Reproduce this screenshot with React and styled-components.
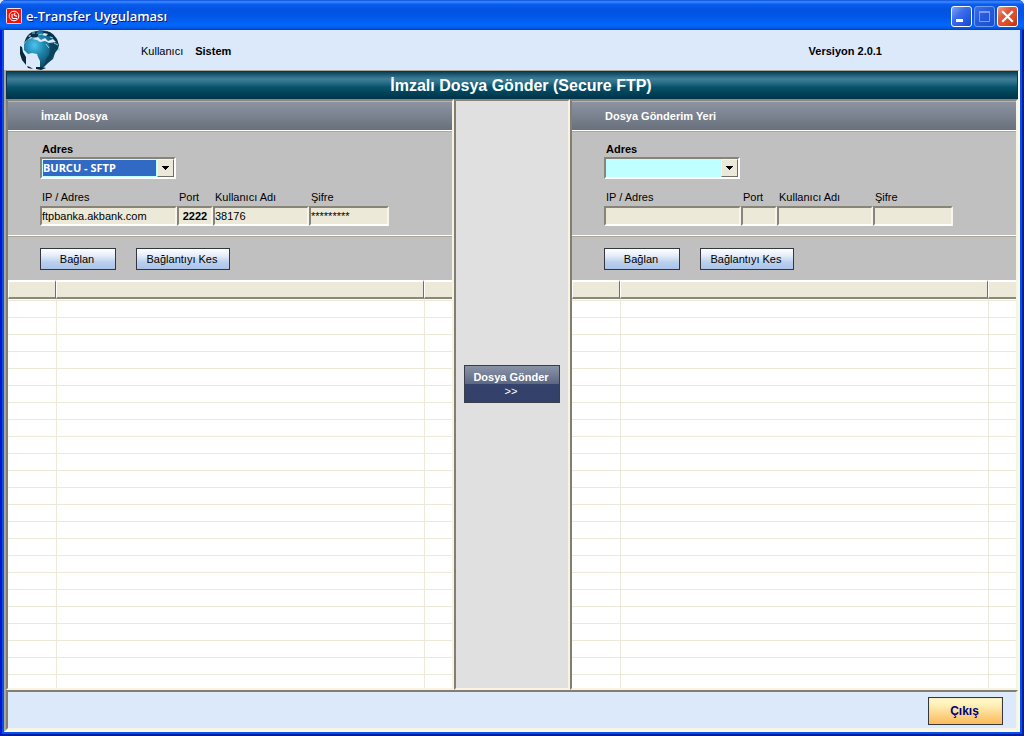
import React, { useState } from 'react';
import styled, { createGlobalStyle } from 'styled-components';

const GlobalStyle = createGlobalStyle`
* {
  box-sizing: border-box;
}
body {
  margin: 0;
  background: #dce9fb;
  font-family: "Liberation Sans", Arial, sans-serif;
  font-size: 11px;
  line-height: 14px;
  color: black;
}
button, input, select {
  font: inherit;
  margin: 0;
}
`
const Window = styled.div`
  display: flex;
  flex-direction: column;
  height: 100vh;
  min-height: 480px;
  padding: 0 2px 2px;
  border: solid;
  border-width: 0 2px 2px;
  border-color: #0831d9 #001ea0 #001ea0 #0019cf;
  border-radius: 6px 6px 0 0;
  background: #0a50e6;
`
const TitleBar = styled.header`
  display: flex;
  align-items: center;
  gap: 4px;
  flex: none;
  height: 30px;
  margin: 0 -4px;
  padding: 2px 6px 0;
  border-radius: 6px 6px 0 0;
  background: linear-gradient(#0a4bd8 0, #3b8bff 6%, #0a5cee 14%, #0253e0 32%, #0257e8 55%, #0366fc 82%, #0260f4 90%, #0142c4 100%);
`
const Title = styled.h1`
  flex: 1;
  margin: 0;
  font: 600 13px/18px "Open Sans", "Noto Sans", sans-serif;
  color: white;
  text-shadow: 1px 1px 0 #0a1883;
`
const Controls = styled.div`
  display: flex;
  gap: 2px;
`
const ControlButton = styled.button`
  display: flex;
  width: 21px;
  height: 21px;
  padding: 0;
  border: 1px solid ${p => p.$dim ? '#6f9bf0' : 'white'};
  border-radius: 3px;
  background: ${p => p.$close
    ? 'linear-gradient(135deg, #f0a08a 0, #e0593a 35%, #dc4a22 70%, #b83208 100%)'
    : p.$dim
      ? 'linear-gradient(135deg, #3f70e8, #2359dc 50%, #1a4fd0)'
      : 'linear-gradient(135deg, #7ea4f6 0, #3a6ceb 40%, #2257e0 75%, #1745bd 100%)'};
`
const InfoBar = styled.div`
  display: flex;
  align-items: center;
  flex: none;
  height: 40px;
  padding: 0 138px 0 16px;
  background: #dce9fb;
`
const UserLabel = styled.span`
  margin-left: 81px;
  padding-top: 2px;
`
const UserName = styled.strong`
  flex: 1;
  margin-left: 12px;
  padding-top: 2px;
`
const Version = styled.strong`
  padding-top: 2px;
`
const Frame = styled.main`
  display: flex;
  flex-direction: column;
  flex: 1;
  min-height: 0;
  border: solid;
  border-width: 1px 2px 2px;
  border-color: #aca899 #fbf9f0 #fbf9f0 #aca899;
  background: #dce9fb;
`
const Banner = styled.h2`
  flex: none;
  margin: 0;
  padding-left: 18px;
  height: 28px;
  border: solid #0a3450;
  border-width: 1px 1px 0;
  background: linear-gradient(#0a4058 0, #26647f 14%, #3f7e97 26%, #2a6d87 40%, #06536b 56%, #004257 78%, #013349 100%);
  font-size: 16px;
  line-height: 27px;
  text-align: center;
  color: white;
`
const Columns = styled.div`
  display: grid;
  grid-template-columns: minmax(0, 1fr) 116px minmax(0, 1fr);
  flex: 1;
  min-height: 0;
`
const Bevel = styled.section`
  display: flex;
  flex-direction: column;
  min-height: 0;
  border: 2px solid;
  border-color: #8a8678 #f7f4e6 #f7f4e6 #827f72;
`
const Panel = styled(Bevel)`
  background: silver;
`
const Middle = styled(Bevel)`
  align-items: center;
  justify-content: center;
  padding-bottom: 22px;
  background: #e0e0e0;
`
const PanelTitle = styled.h3`
  flex: none;
  height: 30px;
  margin: 0;
  padding-left: 33px;
  border-top: 1px solid #b0b4bd;
  border-bottom: 1px solid white;
  background: linear-gradient(#8c94a2, #67707b);
  font-size: 11px;
  line-height: 28px;
  color: white;
`
const Section = styled.div`
  flex: none;
  height: ${p => p.$height}px;
  padding: 10px 0 0 32px;
  border-top: 1px solid #aca899;
  border-bottom: 1px solid ${p => p.$last ? 'silver' : 'white'};
`
const Fields = styled.div`
  display: flex;
  margin-top: 11px;
`
const Field = styled.div`
  width: ${p => p.$width}px;
`
const Label = styled.label`
  display: block;
  margin-bottom: ${p => p.$bold ? 1 : 2}px;
  padding-left: 2px;
  font-weight: ${p => p.$bold ? 'bold' : 'normal'};
`
const Input = styled.input`
  display: block;
  width: 100%;
  height: 20px;
  padding: 0;
  border: 2px solid;
  border-color: #87847a #f8f6ec white #87847a;
  border-radius: 0;
  background: #ece9d8;
  outline: none;
  color: black;
  font-weight: ${p => p.$bold ? 'bold' : 'normal'};
  text-align: ${p => p.$bold ? 'center' : 'left'};
`
const SelectFrame = styled.div`
  display: grid;
  width: 136px;
  height: 22px;
  border: 2px solid;
  border-color: #87847a white white #87847a;
  background: #c0ffff;
`
const Select = styled.select`
  grid-area: 1 / 1;
  width: 100%;
  height: 18px;
  padding: 0;
  appearance: none;
  border: 1px solid #c0ffff;
  border-right: 18px solid #c0ffff;
  border-radius: 0;
  outline: none;
  background: ${p => p.$active ? '#316ac5' : '#c0ffff'};
  color: white;
  font: bold 11px/16px "Noto Sans", "Open Sans", sans-serif;
`
const Arrow = styled.span`
  grid-area: 1 / 1;
  justify-self: end;
  display: grid;
  place-items: center;
  width: 17px;
  height: 18px;
  border: 1px solid;
  border-color: #f8f6ec #716f64 #716f64 #f8f6ec;
  background: #ece9d8;
  pointer-events: none;
`
const Actions = styled.div`
  display: flex;
  gap: 20px;
  padding-top: 1px;
`
const Button = styled.button`
  width: ${p => p.$width}px;
  height: 22px;
  padding: 0 2px 0 0;
  border: 1px solid #34383e;
  background: linear-gradient(#ffffff 0, #e3ecf8 35%, #bcd0ee 65%, #a9c3e9 100%);
  color: black;
`
const SendButton = styled.button`
  width: 96px;
  height: 38px;
  padding: 0 2px 0 0;
  border: 1px solid #3a3e48;
  background: linear-gradient(#8a93a8 0, #5d6883 49%, #35426b 50%, #32406a 100%);
  color: white;
`
const ExitButton = styled.button`
  width: 75px;
  height: 28px;
  padding: 0 2px 0 0;
  border: 1px solid #34383e;
  background: linear-gradient(#fffbd0 0, #ffeeb4 30%, #fdd78c 60%, #fcb95a 100%);
  box-shadow: inset 0 0 2px #f6c98a;
  font-size: 12px;
  font-weight: bold;
  color: #000080;
`
const TableArea = styled.div`
  flex: 1 1 0;
  min-height: 0;
  overflow: hidden;
  background: white;
`
const Table = styled.table`
  width: 100%;
  table-layout: fixed;
  border-spacing: 0;
  th {
    height: 19px;
    padding: 0;
    border: solid;
    border-width: 2px 1px 2px 1px;
    border-color: white #716f64 #8b887b white;
    background: #ece9d8;
  }
  th:first-child {
    width: 48px;
  }
  th:last-child {
    width: 28px;
    border-right: none;
  }
  td {
    height: 17px;
    padding: 0;
    border-bottom: 1px solid #ece9d8;
  }
  tr:first-child td {
    height: 2px;
  }
  td + td {
    border-left: 1px solid #ece9d8;
  }
`
const Footer = styled.footer`
  display: flex;
  justify-content: flex-end;
  flex: none;
  height: 40px;
  padding: 5px 13px 0 0;
  border: 2px solid;
  border-color: #827f72 #f7f4e6 #f7f4e6 #827f72;
`

const AppIcon = () => (
  <svg width="16" height="16" viewBox="0 0 16 16" aria-hidden="true">
    <rect x="0.5" y="0.5" width="15" height="15" rx="1" fill="#f0140c" stroke="#ffd9d0" />
    <circle cx="8" cy="8" r="4.800" fill="none" stroke="white" />
    <path d="M6 6v3q0 1.500 1.500 1.500h3.500M9.500 5q-2.500 1 -0.500 2.500l2 1" fill="none" stroke="white" strokeWidth="1.200" />
  </svg>
)

const Globe = () => (
  <svg width="40" height="40" viewBox="0 0 40 40" aria-hidden="true">
    <defs>
      <radialGradient id="land" cx="0.3" cy="0.4" r="0.7">
        <stop offset="0" stopColor="#4cc4ee" />
        <stop offset="0.4" stopColor="#1f86ae" />
        <stop offset="1" stopColor="#07374d" />
      </radialGradient>
    </defs>
    <path d="M9 4L14 2 20 0 27 1 33 4 37 9 39 15 38 19 35 23 33 29 28 33 24 37 20 38 20 31 18 27 17 24 12 23 8 24 4 20 4 14 7 10 12 8z" fill="url(#land)" />
    <path d="M8 5L12 2 18 1 16 4 20 4 17 7 11 7 7 10 4 13 6 8zM22 1L30 2 35 7 38 12 35 11 31 6 26 6z" fill="#0a3246" />
    <path d="M0 16L2 17 3 22 6 27 6 35 2 30 0 24zM7 36L10 37 13 39 8 38zM16 37L22 37 26 38 21 40 16 39z" fill="#07293a" />
    <path d="M12 9L18 7 21 10 25 8 28 11 33 9 36 12 29 13 25 11 20 12 17 10zM24 3L28 4 26 6 22 5zM8 6L11 5 10 7z" fill="#dce9fb" />
    <path d="M29 13L36 14 37 18 34 20 35 23 32 26 30 31 24 36 26 29 29 25 30 19z" fill="#0a3a52" opacity="0.7" />
    <path d="M12 3h3M18 5l4-1M30 7l3 1M34 13l4 2M26 14l3 4M39 18v3" stroke="#7fd5ef" strokeWidth="1" fill="none" />
  </svg>
)

const FileTable = ({ label }) => (
  <TableArea>
    <Table aria-label={label}>
      <thead>
        <tr><th /><th /><th /></tr>
      </thead>
      <tbody>
        {Array.from({ length: 80 }, (_, i) => (
          <tr key={i}><td /><td /><td /></tr>
        ))}
      </tbody>
    </Table>
  </TableArea>
)

const ConnectionPanel = ({ id, title, options, values }) => {

  const [address, setAddress] = useState(options[0]);

  const fields = [
    { name: 'ip', label: 'IP / Adres', width: 137 },
    { name: 'port', label: 'Port', width: 36, bold: true },
    { name: 'user', label: 'Kullanıcı Adı', width: 96 },
    { name: 'password', label: 'Şifre', width: 80 },
  ]

  return (
    <Panel>
      <PanelTitle>{title}</PanelTitle>
      <Section $height={105}>
        <Label $bold htmlFor={`${id}-address`}>Adres</Label>
        <SelectFrame>
          <Select
            id={`${id}-address`}
            $active={address !== ''}
            value={address}
            onChange={e => setAddress(e.target.value)}
          >
            {options.map(o => <option key={o} value={o}>{o}</option>)}
          </Select>
          <Arrow>
            <svg width="7" height="4" viewBox="0 0 7 4" shapeRendering="crispEdges">
              <path d="M0 0h7v1H6v1H5v1H4v1H3V3H2V2H1V1H0z" />
            </svg>
          </Arrow>
        </SelectFrame>
        <Fields>
          {fields.map(f => (
            <Field key={f.name} $width={f.width}>
              <Label htmlFor={`${id}-${f.name}`}>{f.label}</Label>
              <Input id={`${id}-${f.name}`} $bold={f.bold} value={values[f.name] || ''} readOnly />
            </Field>
          ))}
        </Fields>
      </Section>
      <Section $height={44} $last>
        <Actions>
          <Button type="button" $width={76}>Bağlan</Button>
          <Button type="button" $width={94}>Bağlantıyı Kes</Button>
        </Actions>
      </Section>
      <FileTable label={title} />
    </Panel>
  )
}

const source = {
  ip: 'ftpbanka.akbank.com',
  port: '2222',
  user: '38176',
  password: '*********',
}

const App = () => {
  return (
    <Window>
      <GlobalStyle />
      <TitleBar>
        <AppIcon />
        <Title>e-Transfer Uygulaması</Title>
        <Controls>
          <ControlButton type="button" aria-label="Simge durumuna küçült">
            <svg width="19" height="19"><path d="M4 12h7v3H4z" fill="white" /></svg>
          </ControlButton>
          <ControlButton type="button" $dim aria-label="Ekranı kapla">
            <svg width="19" height="19"><path d="M4.500 5v9.500h10V5" fill="none" stroke="#7f9cf0" strokeWidth="1" /><path d="M4 4h11v2H4z" fill="#7f9cf0" /></svg>
          </ControlButton>
          <ControlButton type="button" $close aria-label="Kapat">
            <svg width="19" height="19"><path d="M5 5l9 9M14 5l-9 9" stroke="white" strokeWidth="2.200" strokeLinecap="square" /></svg>
          </ControlButton>
        </Controls>
      </TitleBar>
      <InfoBar>
        <Globe />
        <UserLabel>Kullanıcı</UserLabel>
        <UserName>Sistem</UserName>
        <Version>Versiyon 2.0.1</Version>
      </InfoBar>
      <Frame>
        <Banner>İmzalı Dosya Gönder (Secure FTP)</Banner>
        <Columns>
          <ConnectionPanel id="source" title="İmzalı Dosya" options={['BURCU - SFTP', '']} values={source} />
          <Middle>
            <SendButton type="button"><strong>Dosya Gönder</strong><br />&gt;&gt;</SendButton>
          </Middle>
          <ConnectionPanel id="target" title="Dosya Gönderim Yeri" options={['', 'BURCU - SFTP']} values={{}} />
        </Columns>
        <Footer>
          <ExitButton type="button">Çıkış</ExitButton>
        </Footer>
      </Frame>
    </Window>
  )
}

export default App
